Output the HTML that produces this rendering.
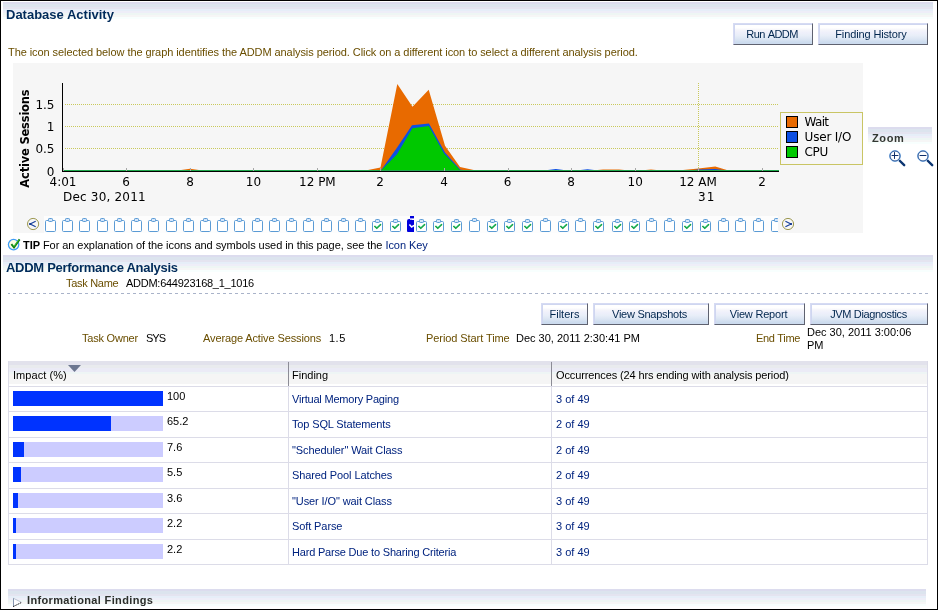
<!DOCTYPE html>
<html lang="en">
<head>
<meta charset="utf-8">
<title>Database Activity</title>
<style>
html,body{margin:0;padding:0;background:#fff;}
body{width:938px;height:610px;overflow:hidden;position:relative;font-family:"Liberation Sans", sans-serif;font-size:11px;color:#000;}
#page{position:absolute;left:0;top:0;width:938px;height:610px;overflow:hidden;will-change:transform;background:#fff;}
#frame{position:absolute;left:0;top:0;width:936px;height:608px;border:1px solid #000;box-sizing:content-box;pointer-events:none;z-index:50;}
.abs{position:absolute;white-space:nowrap;line-height:13px;}
.band{position:absolute;background:linear-gradient(to bottom,#dcdcee 0,#dcdcee 2px,#dce4ee 2px,#dce4ee 5px,#e4e4f0 5px,#e4e4f0 7px,#e6eef8 7px,#e6eef8 9px,#eeeef8 9px,#eeeef8 11px,#eef6f4 11px,#eef6f4 13px,#f6f6f6 13px,#f6f6f6 15px,#f8fffe 15px,#f8fffe 17px,#fff 17px);}
.h1{position:absolute;white-space:nowrap;font-weight:bold;font-size:13px;line-height:16px;color:#002a5a;}
.btn{position:absolute;box-sizing:border-box;height:22px;border:1px solid;border-color:#d6dbf3 #5f6270 #5f6270 #d6dbf3;box-shadow:inset 1px 1px 0 #cfd6f0;background:linear-gradient(to bottom,#ffffff 0%,#ffffff 18%,#f5f5fa 30%,#eff0fb 42%,#e8eef8 58%,#dbe5f3 76%,#cddcee 90%,#cbdaee 100%);color:#00254d;font-size:11px;line-height:20px;text-align:center;white-space:nowrap;}
.lbl{color:#6a4e00;}
.lnk{color:#00237f;}
.bar{position:absolute;left:13px;width:150px;height:15px;background:#ccccff;}
.bar i{position:absolute;left:0;top:0;height:15px;background:#0033ff;display:block;}
.hl{position:absolute;left:8px;width:920px;height:1px;background:#dcdce8;}
.vl{position:absolute;width:1px;background:#dcdce8;}
</style>
</head>
<body>
<div id="page">
<div class="band" style="left:3px;top:2px;width:930px;height:18px"></div>
<div class="h1" style="left:6px;top:7px">Database Activity</div>
<div class="btn" style="left:733px;top:23px;width:80px;letter-spacing:-0.6px;word-spacing:1.2px;padding-right:2px">Run ADDM</div>
<div class="btn" style="left:818px;top:23px;width:110px;letter-spacing:-0.13px;padding-right:4px">Finding History</div>
<div class="abs lbl" style="left:8px;top:46px;letter-spacing:-0.07px">The icon selected below the graph identifies the ADDM analysis period. Click on a different icon to select a different analysis period.</div>
<svg style="position:absolute;left:0;top:0" width="938" height="260" viewBox="0 0 938 260">
<rect x="13" y="63" width="850" height="170" fill="#f6f6f6"/>
<rect x="44" y="216" width="734" height="17" fill="#fdfdfd"/>
<line x1="65" y1="104.5" x2="779" y2="104.5" stroke="#c9c95c" stroke-width="1" stroke-dasharray="1,1" shape-rendering="crispEdges"/>
<line x1="65" y1="126.5" x2="779" y2="126.5" stroke="#c9c95c" stroke-width="1" stroke-dasharray="1,1" shape-rendering="crispEdges"/>
<line x1="65" y1="148.5" x2="779" y2="148.5" stroke="#c9c95c" stroke-width="1" stroke-dasharray="1,1" shape-rendering="crispEdges"/>
<line x1="698.5" y1="83" x2="698.5" y2="171" stroke="#c9c95c" stroke-width="1" stroke-dasharray="1,1" shape-rendering="crispEdges"/>
<polygon fill="#e86a00" points="174,171 190,168.8 206,171 352,171 368,170 380.5,167.5 397.3,84 412.5,106.7 428.7,89.8 445,145.8 460,167 476,170.4 490,171 587,171 603,169.4 619,169.4 635,171 651,169.6 667,171 683,170 698.5,168.4 715.3,166.4 730,171"/>
<polygon fill="#0d4fe3" points="380.5,171 396.6,148.3 412,125.2 429,123.5 445,152.6 460.5,169.8 476,171 540,171 555.8,169 571.5,171 587.5,169.2 603,171 683,171 698.5,169.6 715,169 731,171"/>
<polygon fill="#00c800" points="380.5,171 397,154.3 412.4,128.2 428.8,126 444.2,153.8 460,170 470,171"/>
<rect x="63" y="170" width="716" height="1" fill="#1fa84c"/>
<rect x="62" y="83" width="1" height="89" fill="#000"/>
<rect x="62" y="171" width="717" height="1" fill="#000"/>
<rect x="63" y="168" width="1" height="3" fill="#a8a8a8"/>
<rect x="126" y="168" width="1" height="3" fill="#a8a8a8"/>
<rect x="190" y="168" width="1" height="3" fill="#a8a8a8"/>
<rect x="253" y="168" width="1" height="3" fill="#a8a8a8"/>
<rect x="317" y="168" width="1" height="3" fill="#a8a8a8"/>
<rect x="380" y="168" width="1" height="3" fill="#a8a8a8"/>
<rect x="444" y="168" width="1" height="3" fill="#a8a8a8"/>
<rect x="508" y="168" width="1" height="3" fill="#a8a8a8"/>
<rect x="571" y="168" width="1" height="3" fill="#a8a8a8"/>
<rect x="635" y="168" width="1" height="3" fill="#a8a8a8"/>
<rect x="698" y="168" width="1" height="3" fill="#a8a8a8"/>
<rect x="762" y="168" width="1" height="3" fill="#a8a8a8"/>
<text x="54.5" y="109" text-anchor="end" font-family='"DejaVu Sans","Liberation Sans",sans-serif' font-size="12" fill="#000">1.5</text>
<text x="54.5" y="131" text-anchor="end" font-family='"DejaVu Sans","Liberation Sans",sans-serif' font-size="12" fill="#000">1</text>
<text x="54.5" y="153" text-anchor="end" font-family='"DejaVu Sans","Liberation Sans",sans-serif' font-size="12" fill="#000">0.5</text>
<text x="54.5" y="176" text-anchor="end" font-family='"DejaVu Sans","Liberation Sans",sans-serif' font-size="12" fill="#000">0</text>
<text x="63" y="186" text-anchor="middle" font-family='"DejaVu Sans","Liberation Sans",sans-serif' font-size="12" fill="#000">4:01</text>
<text x="126" y="186" text-anchor="middle" font-family='"DejaVu Sans","Liberation Sans",sans-serif' font-size="12" fill="#000">6</text>
<text x="190" y="186" text-anchor="middle" font-family='"DejaVu Sans","Liberation Sans",sans-serif' font-size="12" fill="#000">8</text>
<text x="253.5" y="186" text-anchor="middle" font-family='"DejaVu Sans","Liberation Sans",sans-serif' font-size="12" fill="#000">10</text>
<text x="317.4" y="186" text-anchor="middle" font-family='"DejaVu Sans","Liberation Sans",sans-serif' font-size="12" fill="#000">12 PM</text>
<text x="380" y="186" text-anchor="middle" font-family='"DejaVu Sans","Liberation Sans",sans-serif' font-size="12" fill="#000">2</text>
<text x="444" y="186" text-anchor="middle" font-family='"DejaVu Sans","Liberation Sans",sans-serif' font-size="12" fill="#000">4</text>
<text x="507.5" y="186" text-anchor="middle" font-family='"DejaVu Sans","Liberation Sans",sans-serif' font-size="12" fill="#000">6</text>
<text x="571" y="186" text-anchor="middle" font-family='"DejaVu Sans","Liberation Sans",sans-serif' font-size="12" fill="#000">8</text>
<text x="635.2" y="186" text-anchor="middle" font-family='"DejaVu Sans","Liberation Sans",sans-serif' font-size="12" fill="#000">10</text>
<text x="698" y="186" text-anchor="middle" font-family='"DejaVu Sans","Liberation Sans",sans-serif' font-size="12" fill="#000">12 AM</text>
<text x="762" y="186" text-anchor="middle" font-family='"DejaVu Sans","Liberation Sans",sans-serif' font-size="12" fill="#000">2</text>
<text x="63" y="201" letter-spacing="0.2" font-family='"DejaVu Sans","Liberation Sans",sans-serif' font-size="12" fill="#000">Dec 30, 2011</text>
<text x="698" y="201" letter-spacing="1" font-family='"DejaVu Sans","Liberation Sans",sans-serif' font-size="12" fill="#000">31</text>
<text transform="translate(29,138.6) rotate(-90)" text-anchor="middle" font-family='"DejaVu Sans","Liberation Sans",sans-serif' font-size="11.5" font-weight="bold" letter-spacing="-0.2" fill="#000">Active Sessions</text>
<rect x="780.5" y="112.5" width="82" height="52" fill="#f6f6f6" stroke="#c9c564" stroke-width="1"/>
<rect x="786.5" y="116.5" width="11" height="11" fill="#e86a00" stroke="#000" stroke-width="1"/>
<text x="804.6" y="126" font-family='"DejaVu Sans","Liberation Sans",sans-serif' font-size="12" letter-spacing="-0.7" fill="#000">Wait</text>
<rect x="786.5" y="131.5" width="11" height="11" fill="#0d4fe3" stroke="#000" stroke-width="1"/>
<text x="804.6" y="141" font-family='"DejaVu Sans","Liberation Sans",sans-serif' font-size="12" letter-spacing="-0.2" fill="#000">User I/O</text>
<rect x="786.5" y="146.5" width="11" height="11" fill="#00c800" stroke="#000" stroke-width="1"/>
<text x="804.6" y="156" font-family='"DejaVu Sans","Liberation Sans",sans-serif' font-size="12" letter-spacing="-0.35" fill="#000">CPU</text>
<defs><clipPath id="strip"><rect x="44" y="214" width="734" height="20"/></clipPath></defs>
<g clip-path="url(#strip)">
<rect x="45.5" y="220.5" width="10" height="11" rx="1.1" fill="#fff" stroke="#5b9bd5" stroke-width="1"/><rect x="48.5" y="218.5" width="4" height="3" rx="0.8" fill="#d4e6fc" stroke="#5b9bd5" stroke-width="1"/>
<rect x="62.5" y="220.5" width="10" height="11" rx="1.1" fill="#fff" stroke="#5b9bd5" stroke-width="1"/><rect x="65.5" y="218.5" width="4" height="3" rx="0.8" fill="#d4e6fc" stroke="#5b9bd5" stroke-width="1"/>
<rect x="79.5" y="220.5" width="10" height="11" rx="1.1" fill="#fff" stroke="#5b9bd5" stroke-width="1"/><rect x="82.5" y="218.5" width="4" height="3" rx="0.8" fill="#d4e6fc" stroke="#5b9bd5" stroke-width="1"/>
<rect x="97.5" y="220.5" width="10" height="11" rx="1.1" fill="#fff" stroke="#5b9bd5" stroke-width="1"/><rect x="100.5" y="218.5" width="4" height="3" rx="0.8" fill="#d4e6fc" stroke="#5b9bd5" stroke-width="1"/>
<rect x="114.5" y="220.5" width="10" height="11" rx="1.1" fill="#fff" stroke="#5b9bd5" stroke-width="1"/><rect x="117.5" y="218.5" width="4" height="3" rx="0.8" fill="#d4e6fc" stroke="#5b9bd5" stroke-width="1"/>
<rect x="131.5" y="220.5" width="10" height="11" rx="1.1" fill="#fff" stroke="#5b9bd5" stroke-width="1"/><rect x="134.5" y="218.5" width="4" height="3" rx="0.8" fill="#d4e6fc" stroke="#5b9bd5" stroke-width="1"/>
<rect x="148.5" y="220.5" width="10" height="11" rx="1.1" fill="#fff" stroke="#5b9bd5" stroke-width="1"/><rect x="151.5" y="218.5" width="4" height="3" rx="0.8" fill="#d4e6fc" stroke="#5b9bd5" stroke-width="1"/>
<rect x="166.5" y="220.5" width="10" height="11" rx="1.1" fill="#fff" stroke="#5b9bd5" stroke-width="1"/><rect x="169.5" y="218.5" width="4" height="3" rx="0.8" fill="#d4e6fc" stroke="#5b9bd5" stroke-width="1"/>
<rect x="183.5" y="220.5" width="10" height="11" rx="1.1" fill="#fff" stroke="#5b9bd5" stroke-width="1"/><rect x="186.5" y="218.5" width="4" height="3" rx="0.8" fill="#d4e6fc" stroke="#5b9bd5" stroke-width="1"/>
<rect x="200.5" y="220.5" width="10" height="11" rx="1.1" fill="#fff" stroke="#5b9bd5" stroke-width="1"/><rect x="203.5" y="218.5" width="4" height="3" rx="0.8" fill="#d4e6fc" stroke="#5b9bd5" stroke-width="1"/>
<rect x="217.5" y="220.5" width="10" height="11" rx="1.1" fill="#fff" stroke="#5b9bd5" stroke-width="1"/><rect x="220.5" y="218.5" width="4" height="3" rx="0.8" fill="#d4e6fc" stroke="#5b9bd5" stroke-width="1"/>
<rect x="234.5" y="220.5" width="10" height="11" rx="1.1" fill="#fff" stroke="#5b9bd5" stroke-width="1"/><rect x="237.5" y="218.5" width="4" height="3" rx="0.8" fill="#d4e6fc" stroke="#5b9bd5" stroke-width="1"/>
<rect x="252.5" y="220.5" width="10" height="11" rx="1.1" fill="#fff" stroke="#5b9bd5" stroke-width="1"/><rect x="255.5" y="218.5" width="4" height="3" rx="0.8" fill="#d4e6fc" stroke="#5b9bd5" stroke-width="1"/>
<rect x="269.5" y="220.5" width="10" height="11" rx="1.1" fill="#fff" stroke="#5b9bd5" stroke-width="1"/><rect x="272.5" y="218.5" width="4" height="3" rx="0.8" fill="#d4e6fc" stroke="#5b9bd5" stroke-width="1"/>
<rect x="286.5" y="220.5" width="10" height="11" rx="1.1" fill="#fff" stroke="#5b9bd5" stroke-width="1"/><rect x="289.5" y="218.5" width="4" height="3" rx="0.8" fill="#d4e6fc" stroke="#5b9bd5" stroke-width="1"/>
<rect x="303.5" y="220.5" width="10" height="11" rx="1.1" fill="#fff" stroke="#5b9bd5" stroke-width="1"/><rect x="306.5" y="218.5" width="4" height="3" rx="0.8" fill="#d4e6fc" stroke="#5b9bd5" stroke-width="1"/>
<rect x="321.5" y="220.5" width="10" height="11" rx="1.1" fill="#fff" stroke="#5b9bd5" stroke-width="1"/><rect x="324.5" y="218.5" width="4" height="3" rx="0.8" fill="#d4e6fc" stroke="#5b9bd5" stroke-width="1"/>
<rect x="338.5" y="220.5" width="10" height="11" rx="1.1" fill="#fff" stroke="#5b9bd5" stroke-width="1"/><rect x="341.5" y="218.5" width="4" height="3" rx="0.8" fill="#d4e6fc" stroke="#5b9bd5" stroke-width="1"/>
<rect x="355.5" y="220.5" width="10" height="11" rx="1.1" fill="#fff" stroke="#5b9bd5" stroke-width="1"/><rect x="358.5" y="218.5" width="4" height="3" rx="0.8" fill="#d4e6fc" stroke="#5b9bd5" stroke-width="1"/>
<rect x="372.5" y="221.5" width="10" height="10" rx="1.1" fill="#fff" stroke="#5b9bd5" stroke-width="1"/><rect x="375.5" y="219.5" width="4" height="3" rx="0.8" fill="#d4e6fc" stroke="#5b9bd5" stroke-width="1"/><path d="M374.4,226 l2.4,2.3 l4.2,-4" fill="none" stroke="#0c9a32" stroke-width="1.5"/><path d="M375.4,226.2 l1.5,1.3 l3.4,-3.2" fill="none" stroke="#2bd08a" stroke-width="0.7"/>
<rect x="390.5" y="221.5" width="10" height="10" rx="1.1" fill="#fff" stroke="#5b9bd5" stroke-width="1"/><rect x="393.5" y="219.5" width="4" height="3" rx="0.8" fill="#d4e6fc" stroke="#5b9bd5" stroke-width="1"/><path d="M392.4,226 l2.4,2.3 l4.2,-4" fill="none" stroke="#0c9a32" stroke-width="1.5"/><path d="M393.4,226.2 l1.5,1.3 l3.4,-3.2" fill="none" stroke="#2bd08a" stroke-width="0.7"/>
<path d="M407,221 q0,-2 2,-2 h1 v-3 h4 v3 h-2 v1 h2 v12 h-6 q-1,0 -1,-1 z" fill="#0000dc"/><rect x="410" y="218.4" width="4" height="1.4" fill="#fff"/><path d="M409.4,224.6 l2.2,2.4 l2.6,-1.6" fill="none" stroke="#fff" stroke-width="1.5"/>
<rect x="416.5" y="221.5" width="10" height="10" rx="1.1" fill="#fff" stroke="#5b9bd5" stroke-width="1"/><rect x="419.5" y="219.5" width="4" height="3" rx="0.8" fill="#d4e6fc" stroke="#5b9bd5" stroke-width="1"/><path d="M418.4,226 l2.4,2.3 l4.2,-4" fill="none" stroke="#0c9a32" stroke-width="1.5"/><path d="M419.4,226.2 l1.5,1.3 l3.4,-3.2" fill="none" stroke="#2bd08a" stroke-width="0.7"/>
<rect x="433.5" y="221.5" width="10" height="10" rx="1.1" fill="#fff" stroke="#5b9bd5" stroke-width="1"/><rect x="436.5" y="219.5" width="4" height="3" rx="0.8" fill="#d4e6fc" stroke="#5b9bd5" stroke-width="1"/><path d="M435.4,226 l2.4,2.3 l4.2,-4" fill="none" stroke="#0c9a32" stroke-width="1.5"/><path d="M436.4,226.2 l1.5,1.3 l3.4,-3.2" fill="none" stroke="#2bd08a" stroke-width="0.7"/>
<rect x="451.5" y="221.5" width="10" height="10" rx="1.1" fill="#fff" stroke="#5b9bd5" stroke-width="1"/><rect x="454.5" y="219.5" width="4" height="3" rx="0.8" fill="#d4e6fc" stroke="#5b9bd5" stroke-width="1"/><path d="M453.4,226 l2.4,2.3 l4.2,-4" fill="none" stroke="#0c9a32" stroke-width="1.5"/><path d="M454.4,226.2 l1.5,1.3 l3.4,-3.2" fill="none" stroke="#2bd08a" stroke-width="0.7"/>
<rect x="469.5" y="220.5" width="10" height="11" rx="1.1" fill="#fff" stroke="#5b9bd5" stroke-width="1"/><rect x="472.5" y="218.5" width="4" height="3" rx="0.8" fill="#d4e6fc" stroke="#5b9bd5" stroke-width="1"/>
<rect x="487.5" y="221.5" width="10" height="10" rx="1.1" fill="#fff" stroke="#5b9bd5" stroke-width="1"/><rect x="490.5" y="219.5" width="4" height="3" rx="0.8" fill="#d4e6fc" stroke="#5b9bd5" stroke-width="1"/><path d="M489.4,226 l2.4,2.3 l4.2,-4" fill="none" stroke="#0c9a32" stroke-width="1.5"/><path d="M490.4,226.2 l1.5,1.3 l3.4,-3.2" fill="none" stroke="#2bd08a" stroke-width="0.7"/>
<rect x="504.5" y="221.5" width="10" height="10" rx="1.1" fill="#fff" stroke="#5b9bd5" stroke-width="1"/><rect x="507.5" y="219.5" width="4" height="3" rx="0.8" fill="#d4e6fc" stroke="#5b9bd5" stroke-width="1"/><path d="M506.4,226 l2.4,2.3 l4.2,-4" fill="none" stroke="#0c9a32" stroke-width="1.5"/><path d="M507.4,226.2 l1.5,1.3 l3.4,-3.2" fill="none" stroke="#2bd08a" stroke-width="0.7"/>
<rect x="522.5" y="221.5" width="10" height="10" rx="1.1" fill="#fff" stroke="#5b9bd5" stroke-width="1"/><rect x="525.5" y="219.5" width="4" height="3" rx="0.8" fill="#d4e6fc" stroke="#5b9bd5" stroke-width="1"/><path d="M524.4,226 l2.4,2.3 l4.2,-4" fill="none" stroke="#0c9a32" stroke-width="1.5"/><path d="M525.4,226.2 l1.5,1.3 l3.4,-3.2" fill="none" stroke="#2bd08a" stroke-width="0.7"/>
<rect x="540.5" y="220.5" width="10" height="11" rx="1.1" fill="#fff" stroke="#5b9bd5" stroke-width="1"/><rect x="543.5" y="218.5" width="4" height="3" rx="0.8" fill="#d4e6fc" stroke="#5b9bd5" stroke-width="1"/>
<rect x="558.5" y="221.5" width="10" height="10" rx="1.1" fill="#fff" stroke="#5b9bd5" stroke-width="1"/><rect x="561.5" y="219.5" width="4" height="3" rx="0.8" fill="#d4e6fc" stroke="#5b9bd5" stroke-width="1"/><path d="M560.4,226 l2.4,2.3 l4.2,-4" fill="none" stroke="#0c9a32" stroke-width="1.5"/><path d="M561.4,226.2 l1.5,1.3 l3.4,-3.2" fill="none" stroke="#2bd08a" stroke-width="0.7"/>
<rect x="575.5" y="220.5" width="10" height="11" rx="1.1" fill="#fff" stroke="#5b9bd5" stroke-width="1"/><rect x="578.5" y="218.5" width="4" height="3" rx="0.8" fill="#d4e6fc" stroke="#5b9bd5" stroke-width="1"/>
<rect x="593.5" y="221.5" width="10" height="10" rx="1.1" fill="#fff" stroke="#5b9bd5" stroke-width="1"/><rect x="596.5" y="219.5" width="4" height="3" rx="0.8" fill="#d4e6fc" stroke="#5b9bd5" stroke-width="1"/><path d="M595.4,226 l2.4,2.3 l4.2,-4" fill="none" stroke="#0c9a32" stroke-width="1.5"/><path d="M596.4,226.2 l1.5,1.3 l3.4,-3.2" fill="none" stroke="#2bd08a" stroke-width="0.7"/>
<rect x="612.5" y="221.5" width="10" height="10" rx="1.1" fill="#fff" stroke="#5b9bd5" stroke-width="1"/><rect x="615.5" y="219.5" width="4" height="3" rx="0.8" fill="#d4e6fc" stroke="#5b9bd5" stroke-width="1"/><path d="M614.4,226 l2.4,2.3 l4.2,-4" fill="none" stroke="#0c9a32" stroke-width="1.5"/><path d="M615.4,226.2 l1.5,1.3 l3.4,-3.2" fill="none" stroke="#2bd08a" stroke-width="0.7"/>
<rect x="629.5" y="221.5" width="10" height="10" rx="1.1" fill="#fff" stroke="#5b9bd5" stroke-width="1"/><rect x="632.5" y="219.5" width="4" height="3" rx="0.8" fill="#d4e6fc" stroke="#5b9bd5" stroke-width="1"/><path d="M631.4,226 l2.4,2.3 l4.2,-4" fill="none" stroke="#0c9a32" stroke-width="1.5"/><path d="M632.4,226.2 l1.5,1.3 l3.4,-3.2" fill="none" stroke="#2bd08a" stroke-width="0.7"/>
<rect x="646.5" y="220.5" width="10" height="11" rx="1.1" fill="#fff" stroke="#5b9bd5" stroke-width="1"/><rect x="649.5" y="218.5" width="4" height="3" rx="0.8" fill="#d4e6fc" stroke="#5b9bd5" stroke-width="1"/>
<rect x="664.5" y="220.5" width="10" height="11" rx="1.1" fill="#fff" stroke="#5b9bd5" stroke-width="1"/><rect x="667.5" y="218.5" width="4" height="3" rx="0.8" fill="#d4e6fc" stroke="#5b9bd5" stroke-width="1"/>
<rect x="682.5" y="221.5" width="10" height="10" rx="1.1" fill="#fff" stroke="#5b9bd5" stroke-width="1"/><rect x="685.5" y="219.5" width="4" height="3" rx="0.8" fill="#d4e6fc" stroke="#5b9bd5" stroke-width="1"/><path d="M684.4,226 l2.4,2.3 l4.2,-4" fill="none" stroke="#0c9a32" stroke-width="1.5"/><path d="M685.4,226.2 l1.5,1.3 l3.4,-3.2" fill="none" stroke="#2bd08a" stroke-width="0.7"/>
<rect x="700.5" y="221.5" width="10" height="10" rx="1.1" fill="#fff" stroke="#5b9bd5" stroke-width="1"/><rect x="703.5" y="219.5" width="4" height="3" rx="0.8" fill="#d4e6fc" stroke="#5b9bd5" stroke-width="1"/><path d="M702.4,226 l2.4,2.3 l4.2,-4" fill="none" stroke="#0c9a32" stroke-width="1.5"/><path d="M703.4,226.2 l1.5,1.3 l3.4,-3.2" fill="none" stroke="#2bd08a" stroke-width="0.7"/>
<rect x="718.5" y="220.5" width="10" height="11" rx="1.1" fill="#fff" stroke="#5b9bd5" stroke-width="1"/><rect x="721.5" y="218.5" width="4" height="3" rx="0.8" fill="#d4e6fc" stroke="#5b9bd5" stroke-width="1"/>
<rect x="735.5" y="220.5" width="10" height="11" rx="1.1" fill="#fff" stroke="#5b9bd5" stroke-width="1"/><rect x="738.5" y="218.5" width="4" height="3" rx="0.8" fill="#d4e6fc" stroke="#5b9bd5" stroke-width="1"/>
<rect x="753.5" y="220.5" width="10" height="11" rx="1.1" fill="#fff" stroke="#5b9bd5" stroke-width="1"/><rect x="756.5" y="218.5" width="4" height="3" rx="0.8" fill="#d4e6fc" stroke="#5b9bd5" stroke-width="1"/>
<rect x="771.5" y="220.5" width="10" height="11" rx="1.1" fill="#fff" stroke="#5b9bd5" stroke-width="1"/><rect x="774.5" y="218.5" width="4" height="3" rx="0.8" fill="#d4e6fc" stroke="#5b9bd5" stroke-width="1"/>
</g>
<circle cx="33.1" cy="224" r="5.6" fill="none" stroke="#9c9850" stroke-width="1"/><path d="M35.7,221.2 L30.1,224 L35.7,226.8" fill="none" stroke="#17409c" stroke-width="1.2"/><rect x="29.1" y="223.2" width="1.8" height="1.6" fill="#0b2f8a"/>
<circle cx="788" cy="224" r="5.6" fill="none" stroke="#9c9850" stroke-width="1"/><path d="M785.4,221.2 L791,224 L785.4,226.8" fill="none" stroke="#17409c" stroke-width="1.2"/><rect x="790.2" y="223.2" width="1.8" height="1.6" fill="#0b2f8a"/>
<circle cx="13.6" cy="244.6" r="5.2" fill="#fcfce2" stroke="#3f9df5" stroke-width="1.3"/>
<path d="M11.4,244.2 l2.6,3.2 l5.6,-8" fill="none" stroke="#0b7d12" stroke-width="1.9"/><path d="M12.6,244.6 l1.5,1.7 l4.6,-6.4" fill="none" stroke="#58d838" stroke-width="0.7"/>
</svg>
<div class="band" style="left:868px;top:127px;width:64px;height:17px"></div>
<div class="abs" style="left:872px;top:132px;font-weight:bold;color:#333833;letter-spacing:0.6px">Zoom</div>
<svg style="position:absolute;left:889px;top:150px" width="17" height="17" viewBox="0 0 17 17"><line x1="10" y1="10" x2="15.2" y2="15.2" stroke="#0c3672" stroke-width="2.4" stroke-linecap="round"/><circle cx="6" cy="6" r="5.6" fill="#fdfeff" stroke="#a3ccf6" stroke-width="1"/><circle cx="6" cy="6" r="5" fill="none" stroke="#1c4c92" stroke-width="1"/><line x1="2.6" y1="5.5" x2="9.4" y2="5.5" stroke="#0f2f6a" stroke-width="1"/><line x1="5.5" y1="2.1" x2="5.5" y2="8.9" stroke="#0f2f6a" stroke-width="1"/></svg>
<svg style="position:absolute;left:917px;top:150px" width="17" height="17" viewBox="0 0 17 17"><line x1="10" y1="10" x2="15.2" y2="15.2" stroke="#0c3672" stroke-width="2.4" stroke-linecap="round"/><circle cx="6" cy="6" r="5.6" fill="#fdfeff" stroke="#a3ccf6" stroke-width="1"/><circle cx="6" cy="6" r="5" fill="none" stroke="#1c4c92" stroke-width="1"/><line x1="2.6" y1="5.5" x2="9.4" y2="5.5" stroke="#0f2f6a" stroke-width="1"/></svg>
<div class="abs" style="left:23px;top:239px;letter-spacing:-0.06px;"><b>TIP</b> For an explanation of the icons and symbols used in this page, see the <span class="lnk">Icon Key</span></div>
<div class="band" style="left:3px;top:255px;width:930px;height:18px"></div>
<div class="h1" style="left:6px;top:260px;letter-spacing:-0.28px">ADDM Performance Analysis</div>
<div class="abs lbl" style="left:66px;top:277px;letter-spacing:-0.3px;">Task Name</div>
<div class="abs" style="left:126px;top:277px;letter-spacing:-0.26px;">ADDM:644923168_1_1016</div>
<div style="position:absolute;left:8px;top:293px;width:920px;height:1px;background:repeating-linear-gradient(to right,#a9b3c9 0,#a9b3c9 2px,transparent 2px,transparent 5px,#a9b3c9 5px,#a9b3c9 6px)"></div>
<div class="btn" style="left:541px;top:303px;width:47px;">Filters</div>
<div class="btn" style="left:593px;top:303px;width:116px;letter-spacing:-0.27px;padding-right:3px;">View Snapshots</div>
<div class="btn" style="left:714px;top:303px;width:91px;letter-spacing:-0.2px;padding-right:2px;">View Report</div>
<div class="btn" style="left:810px;top:303px;width:118px;letter-spacing:-0.35px;padding-right:1px;">JVM Diagnostics</div>
<div class="abs lbl" style="left:82px;top:332px;letter-spacing:-0.22px;">Task Owner</div>
<div class="abs" style="left:146px;top:332px;letter-spacing:-1.0px;">SYS</div>
<div class="abs lbl" style="left:203px;top:332px;letter-spacing:-0.12px;">Average Active Sessions</div>
<div class="abs" style="left:329px;top:332px;letter-spacing:0.5px;">1.5</div>
<div class="abs lbl" style="left:426px;top:332px;letter-spacing:-0.08px;">Period Start Time</div>
<div class="abs" style="left:516px;top:332px;">Dec 30, 2011 2:30:41 PM</div>
<div class="abs lbl" style="left:756px;top:332px;letter-spacing:-0.3px;">End Time</div>
<div class="abs" style="left:807px;top:326px;white-space:normal;width:115px">Dec 30, 2011 3:00:06<br>PM</div>
<div style="position:absolute;left:8px;top:361px;width:920px;height:25px;background:linear-gradient(to bottom,#e2e2ec 0,#e2e2ec 4px,#e9ebee 4px,#e9ebee 7px,#ebebf6 7px,#ebebf6 11px,#eef5f5 11px,#eef5f5 13px,#f5f5f5 13px,#f5f5f5 23px,#fff 23px)"></div>
<div class="hl" style="top:386px"></div>
<div class="hl" style="top:411px"></div>
<div class="hl" style="top:437px"></div>
<div class="hl" style="top:462px"></div>
<div class="hl" style="top:488px"></div>
<div class="hl" style="top:513px"></div>
<div class="hl" style="top:539px"></div>
<div class="hl" style="top:564px"></div>
<div class="vl" style="left:8px;top:361px;height:204px"></div>
<div class="vl" style="left:288px;top:361px;height:204px"></div>
<div class="vl" style="left:551px;top:361px;height:204px"></div>
<div class="vl" style="left:927px;top:361px;height:204px"></div>
<div class="vl" style="left:288px;top:362px;height:24px;background:#8c8c96"></div>
<div class="vl" style="left:551px;top:362px;height:24px;background:#8c8c96"></div>
<div class="abs" style="left:13px;top:369px;letter-spacing:0.05px;">Impact (%)</div>
<svg style="position:absolute;left:67px;top:364px" width="15" height="9" viewBox="0 0 15 9"><polygon points="1,1 14,1 7.5,8" fill="#6d7790"/></svg>
<div class="abs" style="left:292px;top:369px;">Finding</div>
<div class="abs" style="left:556px;top:369px;letter-spacing:-0.12px;">Occurrences (24 hrs ending with analysis period)</div>
<div class="bar" style="top:391px"><i style="width:150px"></i></div>
<div class="abs" style="left:167px;top:390px;">100</div>
<div class="abs lnk" style="left:292px;top:393px;letter-spacing:-0.2px;">Virtual Memory Paging</div>
<div class="abs lnk" style="left:556px;top:393px;">3 of 49</div>
<div class="bar" style="top:416px"><i style="width:98px"></i></div>
<div class="abs" style="left:167px;top:415px;">65.2</div>
<div class="abs lnk" style="left:292px;top:418px;letter-spacing:-0.14px;">Top SQL Statements</div>
<div class="abs lnk" style="left:556px;top:418px;">2 of 49</div>
<div class="bar" style="top:442px"><i style="width:11px"></i></div>
<div class="abs" style="left:167px;top:441px;">7.6</div>
<div class="abs lnk" style="left:292px;top:444px;letter-spacing:-0.1px;">&quot;Scheduler&quot; Wait Class</div>
<div class="abs lnk" style="left:556px;top:444px;">2 of 49</div>
<div class="bar" style="top:467px"><i style="width:8px"></i></div>
<div class="abs" style="left:167px;top:466px;">5.5</div>
<div class="abs lnk" style="left:292px;top:469px;letter-spacing:-0.1px;">Shared Pool Latches</div>
<div class="abs lnk" style="left:556px;top:469px;">2 of 49</div>
<div class="bar" style="top:493px"><i style="width:5px"></i></div>
<div class="abs" style="left:167px;top:492px;">3.6</div>
<div class="abs lnk" style="left:292px;top:495px;letter-spacing:-0.1px;">&quot;User I/O&quot; wait Class</div>
<div class="abs lnk" style="left:556px;top:495px;">3 of 49</div>
<div class="bar" style="top:518px"><i style="width:3px"></i></div>
<div class="abs" style="left:167px;top:517px;">2.2</div>
<div class="abs lnk" style="left:292px;top:520px;letter-spacing:-0.1px;">Soft Parse</div>
<div class="abs lnk" style="left:556px;top:520px;">3 of 49</div>
<div class="bar" style="top:544px"><i style="width:3px"></i></div>
<div class="abs" style="left:167px;top:543px;">2.2</div>
<div class="abs lnk" style="left:292px;top:546px;letter-spacing:-0.19px;">Hard Parse Due to Sharing Criteria</div>
<div class="abs lnk" style="left:556px;top:546px;">3 of 49</div>
<div class="band" style="left:8px;top:589px;width:918px;height:18px"></div>
<svg style="position:absolute;left:12px;top:596px" width="12" height="12" viewBox="0 0 12 12"><polygon points="1.5,2.3 9.6,6.4 1.5,10.5" fill="#fdfeff"/><line x1="1.5" y1="2" x2="1.5" y2="10.8" stroke="#8797b2" stroke-width="1"/><line x1="1.5" y1="2.3" x2="9.6" y2="6.4" stroke="#b4bdcc" stroke-width="0.9"/><line x1="1.2" y1="10.6" x2="9.8" y2="6.3" stroke="#1c1c1c" stroke-width="1" stroke-dasharray="1.6,0.8"/></svg>
<div class="abs" style="left:27px;top:594px;font-weight:bold;font-size:11px;color:#2b2f2b;letter-spacing:0.35px">Informational Findings</div>
<div id="frame"></div>
</div>
</body>
</html>
